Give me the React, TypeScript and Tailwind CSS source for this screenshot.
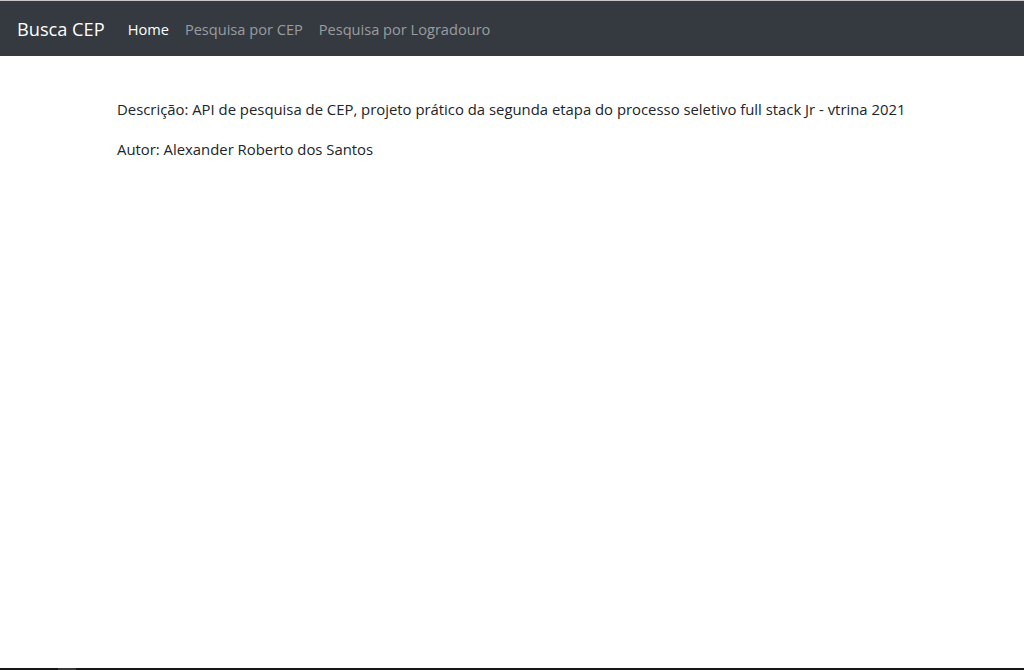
import React from 'react';

const font = { fontFamily: '"Open Sans", "Noto Sans", sans-serif' };

export default function App() {
  return (
    <div className="flex h-[670px] flex-col bg-white text-[#212529]" style={font}>
      <div className="h-px bg-[#c8c8c8]" />
      <nav className="flex h-[55px] items-center bg-[#343a40] px-[17px] pt-[3px]">
        <span className="mr-[23px] text-[18.2px] text-white">Busca CEP</span>
        <div className="flex gap-[16px] text-[14.6px]">
          <a className="text-white">Home</a>
          <a className="text-[#9a9da0]">Pesquisa por CEP</a>
          <a className="text-[#9a9da0]">Pesquisa por Logradouro</a>
        </div>
      </nav>
      <main className="flex-1 pl-[117px] pt-[42px] text-[14.87px]">
        <p className="mb-[18px]">Descrição: API de pesquisa de CEP, projeto prático da segunda etapa do processo seletivo full stack Jr - vtrina 2021</p>
        <p>Autor: Alexander Roberto dos Santos</p>
      </main>
      <div className="flex h-[2px] bg-[#151515]">
        <div className="ml-[58px] w-[18px] bg-[#3a3a3a]" />
      </div>
    </div>
  );
}
